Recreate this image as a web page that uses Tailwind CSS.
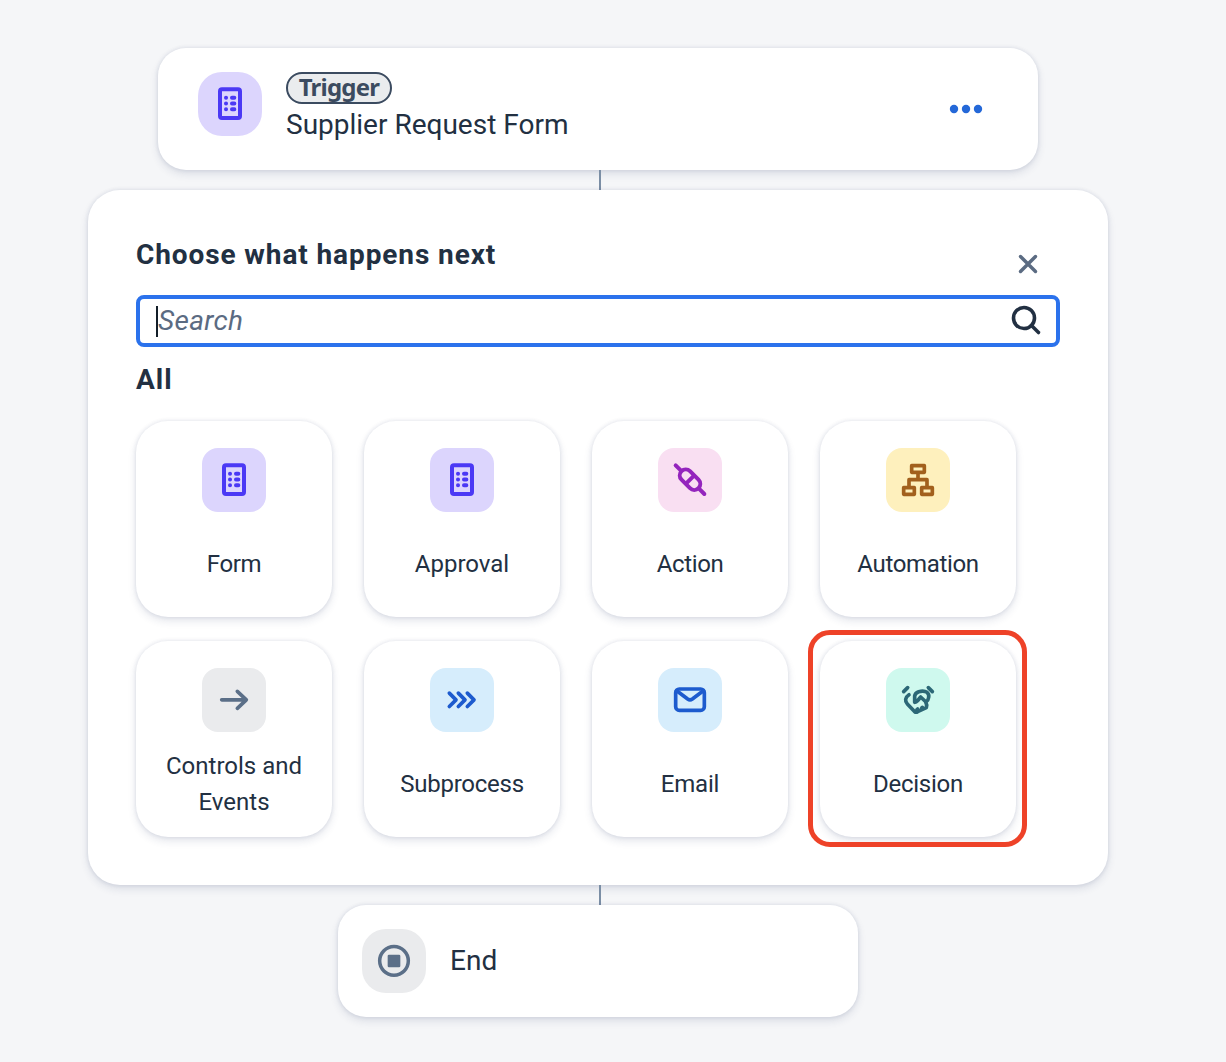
<!DOCTYPE html>
<html lang="en">
<head>
<meta charset="utf-8">
<title>Process Builder</title>
<script src="https://cdn.jsdelivr.net/npm/@tailwindcss/browser@4"></script>
</head>
<body class="h-[1062px] overflow-hidden bg-[#f5f6f8] pt-12 pl-[88px] font-[Roboto,sans-serif] text-[#223042]">
<svg class="hidden">
  <symbol id="form" viewBox="0 0 192 192">
    <rect x="66" y="52" width="60" height="86" rx="6" fill="none" stroke="currentColor" stroke-width="12"/>
    <path d="M84 77h.1M84 94.500h.1M84 112h.1M102 77h7M102 94.500h7M102 112h7" fill="none" stroke="currentColor" stroke-width="12" stroke-linecap="round"/>
  </symbol>
</svg>
<main class="flex w-[1020px] flex-col items-center">
  <section class="flex h-[122px] w-[880px] items-start rounded-[28px] bg-white pt-6 pr-[54px] pl-10 shadow-[0_0_4px_rgba(34,53,98,0.12),0_4px_8px_rgba(34,53,98,0.12)]">
    <div class="size-16 rounded-3xl bg-[#dcd5fd] text-[#4b39f5]"><svg class="size-16"><use href="#form"/></svg></div>
    <div class="ml-6 flex flex-1 flex-col items-start">
      <span class="flex h-8 w-[106px] items-center justify-center rounded-full border-2 border-[#3b4b60] bg-[#eaecee] pb-0.5 font-['Noto_Sans',sans-serif] text-2xl font-bold tracking-[-0.75px] text-[#3b4b60]">Trigger</span>
      <span class="mt-[3px] text-[28px] leading-9 whitespace-nowrap">Supplier Request Form</span>
    </div>
    <svg class="mt-8 h-[10px] w-[36px]" viewBox="0 0 36 10" fill="#2468d8"><circle cx="6" cy="5" r="4.200"/><circle cx="18" cy="5" r="4.200"/><circle cx="30" cy="5" r="4.200"/></svg>
  </section>
  <div class="ml-1 h-5 w-0.5 bg-[#7b8ea5]"></div>
  <section class="h-[695px] w-full rounded-[32px] bg-white px-12 pt-12 shadow-[0_0_4px_rgba(34,53,98,0.12),0_4px_8px_rgba(34,53,98,0.12)]">
    <div class="flex h-[57px] justify-between pr-[21px]">
      <h1 class="mt-px text-[28px] leading-8 font-bold tracking-[0.9px]">Choose what happens next</h1>
      <svg class="mt-[15px] size-[22px]" viewBox="0 0 22 22" fill="none" stroke="#5b6b82" stroke-width="3.500" stroke-linecap="round"><path d="M3.500 3.500l15 15M18.500 3.500l-15 15"/></svg>
    </div>
    <div class="flex h-[52px] items-center justify-between rounded-lg border-4 border-[#2b72ec] pr-3.5 pl-4">
      <div class="flex items-center"><span class="h-[31px] w-0.5 bg-[#131e29]"></span><span class="text-[28px] leading-9 tracking-[0.3px] text-[#5b6b82] italic">Search</span></div>
      <svg class="size-8" viewBox="0 0 32 32" fill="none" stroke="#223042" stroke-width="3.600" stroke-linecap="round"><circle cx="14" cy="13" r="10.500"/><path d="M21.500 20.500l7 7"/></svg>
    </div>
    <h2 class="mt-[17px] h-[57px] text-[28px] leading-8 font-bold tracking-[1px]">All</h2>
    <div class="grid grid-cols-[repeat(4,196px)] gap-x-8 gap-y-6 text-center text-2xl leading-9">
      <div class="flex h-[196px] flex-col items-center rounded-[32px] pt-[27px] shadow-[0_0_4px_rgba(34,53,98,0.12),0_4px_8px_rgba(34,53,98,0.12)]">
        <div class="size-16 rounded-2xl bg-[#dcd5fd] text-[#4b39f5]"><svg class="size-16"><use href="#form"/></svg></div>
        <div class="mt-[34px] tracking-[-0.3px]">Form</div>
      </div>
      <div class="flex h-[196px] flex-col items-center rounded-[32px] pt-[27px] shadow-[0_0_4px_rgba(34,53,98,0.12),0_4px_8px_rgba(34,53,98,0.12)]">
        <div class="size-16 rounded-2xl bg-[#dcd5fd] text-[#4b39f5]"><svg class="size-16"><use href="#form"/></svg></div>
        <div class="mt-[34px]">Approval</div>
      </div>
      <div class="flex h-[196px] flex-col items-center rounded-[32px] pt-[27px] shadow-[0_0_4px_rgba(34,53,98,0.12),0_4px_8px_rgba(34,53,98,0.12)]">
        <div class="size-16 rounded-2xl bg-[#f9dff2] text-[#9425bd]"><svg class="size-16" viewBox="0 0 192 192" fill="none" stroke="currentColor" stroke-width="12" stroke-linecap="round"><path d="M53 52l16 16M123 122l16 16M105 86l-18 18"/><rect x="60" y="77" width="72" height="36" rx="18" transform="rotate(45 96 95)"/></svg></div>
        <div class="mt-[34px] tracking-[-0.35px]">Action</div>
      </div>
      <div class="flex h-[196px] flex-col items-center rounded-[32px] pt-[27px] shadow-[0_0_4px_rgba(34,53,98,0.12),0_4px_8px_rgba(34,53,98,0.12)]">
        <div class="size-16 rounded-2xl bg-[#fef0bd] text-[#a2601d]"><svg class="size-16" viewBox="0 0 192 192" fill="none" stroke="currentColor" stroke-width="11" stroke-linejoin="round"><rect x="77" y="53" width="38" height="20"/><rect x="53" y="119" width="32" height="20"/><rect x="107" y="119" width="32" height="20"/><path d="M96 73v22M69 119V95h54v24"/></svg></div>
        <div class="mt-[34px] tracking-[-0.35px]">Automation</div>
      </div>
      <div class="flex h-[196px] flex-col items-center rounded-[32px] pt-[27px] shadow-[0_0_4px_rgba(34,53,98,0.12),0_4px_8px_rgba(34,53,98,0.12)]">
        <div class="size-16 rounded-2xl bg-[#eaebed] text-[#5b6f88]"><svg class="size-16" viewBox="0 0 192 192" fill="none" stroke="currentColor" stroke-width="11" stroke-linecap="round" stroke-linejoin="round"><path d="M59 95.500h74M106 70l27 25.500-27 25.500"/></svg></div>
        <div class="mt-4">Controls and<br>Events</div>
      </div>
      <div class="flex h-[196px] flex-col items-center rounded-[32px] pt-[27px] shadow-[0_0_4px_rgba(34,53,98,0.12),0_4px_8px_rgba(34,53,98,0.12)]">
        <div class="size-16 rounded-2xl bg-[#d6edfc] text-[#1d5bce]"><svg class="size-16" viewBox="0 0 192 192" fill="none" stroke="currentColor" stroke-width="11" stroke-linecap="round" stroke-linejoin="round"><path d="M58 75.500l20 20-20 20M85 75.500l20 20-20 20M112 75.500l20 20-20 20"/></svg></div>
        <div class="mt-[34px] tracking-[-0.25px]">Subprocess</div>
      </div>
      <div class="flex h-[196px] flex-col items-center rounded-[32px] pt-[27px] shadow-[0_0_4px_rgba(34,53,98,0.12),0_4px_8px_rgba(34,53,98,0.12)]">
        <div class="size-16 rounded-2xl bg-[#d6edfc] text-[#1d5bce]"><svg class="size-16" viewBox="0 0 192 192" fill="none" stroke="currentColor" stroke-width="11" stroke-linecap="round" stroke-linejoin="round"><rect x="53" y="63" width="86" height="64" rx="11"/><path d="M56 68l33 25q7 5 14 0l33-25"/></svg></div>
        <div class="mt-[34px] tracking-[-0.2px]">Email</div>
      </div>
      <div class="relative flex h-[196px] flex-col items-center rounded-[32px] pt-[27px] shadow-[0_0_4px_rgba(34,53,98,0.12),0_4px_8px_rgba(34,53,98,0.12)]">
        <div class="size-16 rounded-2xl bg-[#cff9ee] text-[#2c6877]"><svg class="size-16" viewBox="0 0 192 192" fill="none" stroke="currentColor" stroke-width="11" stroke-linecap="round" stroke-linejoin="round"><path d="M53 71l12-12M127 59l12 12M69 80C57 88 56 100 64 108l23 24q4 2 8-1l26-12q3-8-2-17M93 125l2-2M107 120l2-2M86 103V84q1-9 12-13 16-4 25 2 7 6 5 15-1 9-8 14l-16-15-10 12q-3 4-8 4"/></svg></div>
        <div class="mt-[34px] tracking-[-0.25px]">Decision</div>
        <div class="absolute -top-[11px] -left-[12px] h-[217px] w-[219px] rounded-[22px] border-[5px] border-[#ee4228]"></div>
      </div>
    </div>
  </section>
  <div class="ml-1 h-5 w-0.5 bg-[#7b8ea5]"></div>
  <section class="flex h-28 w-[520px] items-center gap-6 rounded-[28px] bg-white px-6 shadow-[0_0_4px_rgba(34,53,98,0.12),0_4px_8px_rgba(34,53,98,0.12)]">
    <div class="size-16 rounded-3xl bg-[#eaebed] text-[#5b6f88]"><svg class="size-16" viewBox="0 0 192 192" fill="none" stroke="currentColor" stroke-width="10.500"><circle cx="96" cy="95.500" r="43"/><rect x="77" y="77" width="38" height="38" rx="4" fill="currentColor" stroke="none"/></svg></div>
    <span class="text-[28px] leading-9">End</span>
  </section>
</main>
</body>
</html>
